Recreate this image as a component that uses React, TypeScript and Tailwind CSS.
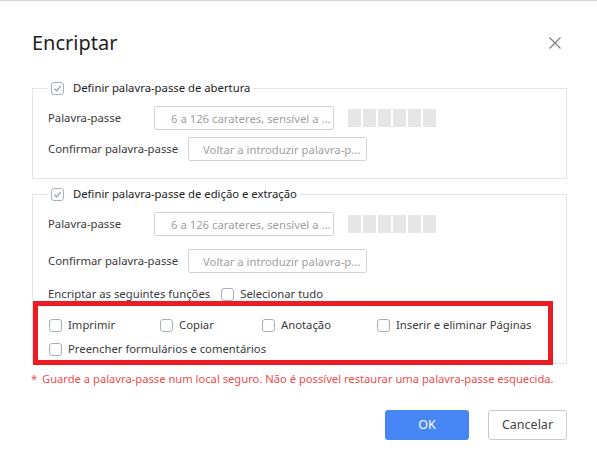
import React from "react";

const Check = ({ checked }: { checked?: boolean }) => (
  <span className="w-[13px] h-[13px] rounded-[3px] border border-[#a9aeb8] bg-white flex items-center justify-center shrink-0">
    {checked && (
      <svg width="9" height="9" viewBox="0 0 9 9">
        <path d="M1.4 4.6 L3.6 6.8 L7.8 2.2" fill="none" stroke="#8d96a8" strokeWidth="1.2" />
      </svg>
    )}
  </span>
);

const Bars = () => (
  <div className="flex gap-[2px] ml-[14px]">
    {[0, 1, 2, 3, 4, 5].map((i) => (
      <div key={i} className="w-[13px] h-[18px] bg-[#e6e6e6]" />
    ))}
  </div>
);

const Input = ({ text, w, pl }: { text: string; w: string; pl: string }) => (
  <input
    readOnly
    placeholder={text}
    className={`${w} ${pl} h-[24px] border border-[#d3d3d3] rounded-[2px] text-[11.3px] outline-none placeholder:text-[#a0a0a0] bg-white`}
  />
);

const PasswordRow = () => (
  <div className="flex items-center h-[24px]">
    <span className="w-[106px] shrink-0">Palavra-passe</span>
    <Input text="6 a 126 carateres, sensível a ..." w="w-[180px]" pl="pl-[16px]" />
    <Bars />
  </div>
);

const ConfirmRow = () => (
  <div className="flex items-center h-[24px]">
    <span className="w-[140px] shrink-0">Confirmar palavra-passe</span>
    <Input text="Voltar a introduzir palavra-p..." w="w-[179px]" pl="pl-[14px]" />
  </div>
);

const Item = ({ label, w }: { label: string; w?: string }) => (
  <label className={`flex items-center gap-[6px] h-[18px] ${w ?? ""}`}>
    <Check />
    <span>{label}</span>
  </label>
);

export default function App() {
  return (
    <div className="w-[597px] h-[467px] bg-white border-t border-[#d4d4d4] font-['Noto_Sans',sans-serif] text-[#3a3a3a] text-[11.3px] leading-[18px] pl-[32px] pr-[30px] pt-[28px]">
      <div className="flex items-center justify-between h-[28px]">
        <h1 className="text-[20px] leading-[28px] text-[#1e1e1e]">Encriptar</h1>
        <svg width="12" height="12" viewBox="0 0 12 12" className="mr-[6px]">
          <path d="M0.5 0.5 L11.5 11.5 M11.5 0.5 L0.5 11.5" stroke="#777" strokeWidth="1.1" />
        </svg>
      </div>

      <fieldset className="mt-[22px] border border-[#e4e4e4] pl-[15px] pr-[14px] pb-[17px]">
        <legend className="px-[3px] flex items-center gap-[9px] text-[#222]">
          <Check checked />
          <span>Definir palavra-passe de abertura</span>
        </legend>
        <div className="mt-[9px] flex flex-col gap-[7px]">
          <PasswordRow />
          <ConfirmRow />
        </div>
      </fieldset>

      <fieldset className="mt-[6px] border border-[#e4e4e4] pl-[15px] pr-[14px] pb-0">
        <legend className="px-[3px] flex items-center gap-[9px] text-[#222]">
          <Check checked />
          <span>Definir palavra-passe de edição e extração</span>
        </legend>
        <div className="mt-[9px] flex flex-col gap-[13px]">
          <PasswordRow />
          <ConfirmRow />
        </div>
        <div className="mt-[12px] flex items-center h-[18px]">
          <span>Encriptar as seguintes funções</span>
          <label className="flex items-center gap-[6px] ml-[11px]">
            <Check />
            <span>Selecionar tudo</span>
          </label>
        </div>
        <div className="relative z-10 -mt-[2px] -ml-[15px] -mr-[1px] -mb-[2px] border-[5px] border-[#ec1c24] pl-[11px] pt-[10px] pb-[2px] flex flex-col gap-[6px]">
          <div className="flex items-center">
            <Item label="Imprimir" w="w-[111px]" />
            <Item label="Copiar" w="w-[102px]" />
            <Item label="Anotação" w="w-[115px]" />
            <Item label="Inserir e eliminar Páginas" />
          </div>
          <div className="flex items-center">
            <Item label="Preencher formulários e comentários" />
          </div>
        </div>
      </fieldset>

      <div className="mt-[6px] -ml-[1px] flex items-center text-[#ef4b4b] text-[11.2px] leading-[18px]">
        <span className="w-[11px]">*</span>
        <span>Guarde a palavra-passe num local seguro. Não é possível restaurar uma palavra-passe esquecida.</span>
      </div>

      <div className="mt-[22px] flex justify-end gap-[19px]">
        <button className="w-[84px] h-[30px] rounded-[3px] bg-[#4687f5] text-white text-[12.5px]">OK</button>
        <button className="w-[79px] h-[30px] rounded-[3px] border border-[#c5cad3] bg-white text-[#444] text-[12.5px]">Cancelar</button>
      </div>
    </div>
  );
}
